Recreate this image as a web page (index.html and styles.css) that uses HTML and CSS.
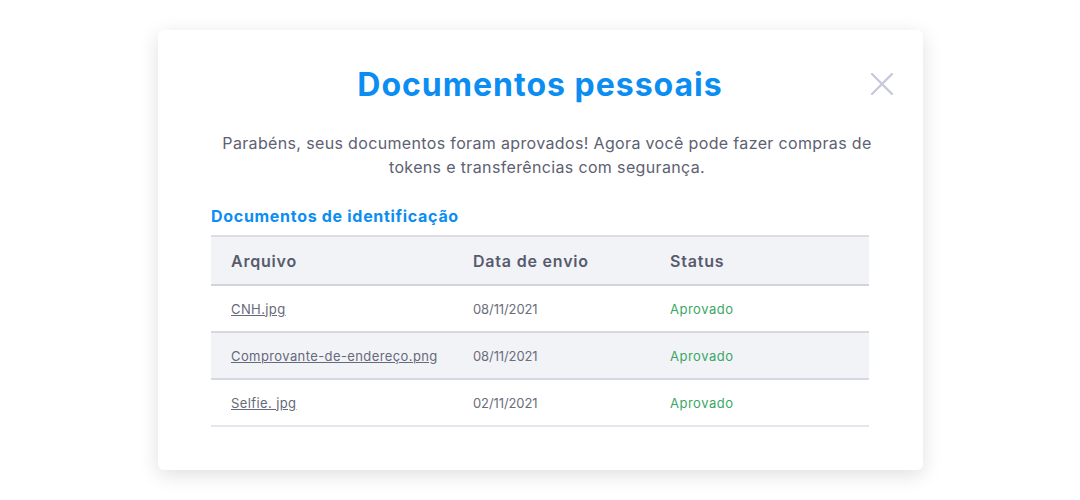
FILE: index.html
```html
<!DOCTYPE html>
<html lang="pt-BR">
<head>
<meta charset="utf-8">
<link rel="stylesheet" href="styles.css">
</head>
<body>
<div class="modal">
  <div class="modal-head">
    <h1 class="title">Documentos pessoais</h1>
    <button class="close" aria-label="Fechar">
      <svg width="22" height="22" viewBox="0 0 22 22"><path d="M1 1L21 21M21 1L1 21" stroke="#c8cadb" stroke-width="2.4" stroke-linecap="round"/></svg>
    </button>
  </div>
  <p class="lead">Parabéns, seus documentos foram aprovados! Agora você pode fazer compras de tokens e transferências com segurança.</p>
  <h2 class="section">Documentos de identificação</h2>
  <table class="docs">
    <thead>
      <tr><th class="c1">Arquivo</th><th class="c2">Data de envio</th><th>Status</th></tr>
    </thead>
    <tbody>
      <tr><td><a class="file">CNH.jpg</a></td><td class="date">08/11/2021</td><td class="ok">Aprovado</td></tr>
      <tr class="alt"><td><a class="file">Comprovante-de-endereço.png</a></td><td class="date">08/11/2021</td><td class="ok">Aprovado</td></tr>
      <tr class="last"><td><a class="file">Selfie. jpg</a></td><td class="date">02/11/2021</td><td class="ok">Aprovado</td></tr>
    </tbody>
  </table>
</div>
</body>
</html>
```
FILE: styles.css
```css
html, body { margin: 0; padding: 0; background: #ffffff; }
body { font-family: "Inter", "Noto Sans", sans-serif; padding: 30px 0; min-height: 500px; box-sizing: border-box; }
.modal {
  width: 765px; box-sizing: border-box; margin: 0 0 0 158px;
  background: #fff; border-radius: 6px;
  box-shadow: 0 5px 20px rgba(0,0,0,0.13);
  padding: 34px 54px 43px 53px;
  height: 440px;
}
.modal-head { position: relative; text-align: center; }
.title { margin: 0; font-size: 32px; line-height: 42px; font-weight: 700; color: #0b8df2; letter-spacing: 1px; }
.close { position: absolute; right: -24px; top: 9px; border: 0; background: none; padding: 0; width: 22px; height: 22px; display: block; }
.lead { margin: 25px -6px 0 8px; text-align: center; font-size: 16px; line-height: 24px; color: #5d6172; letter-spacing: 0.35px; }
.section { margin: 27px 0 0; font-size: 16px; line-height: 20px; font-weight: 700; color: #0b8df2; letter-spacing: 0.7px; }
.docs { width: 100%; border-collapse: collapse; margin-top: 9px; }
.docs th { text-align: left; font-size: 16px; font-weight: 600; color: #575b6d; background: #f2f3f7; height: 47px; padding: 0 0 0 20px; border-top: 2px solid #dcdde6; border-bottom: 2px solid #d3d4df; letter-spacing: 0.8px; }
.docs th.c1 { width: 222px; }
.docs th.c2 { width: 177px; }
.docs td { font-size: 13px; color: #6a6d7b; padding: 0 0 0 20px; height: 45px; border-bottom: 2px solid #d6d7e1; letter-spacing: 0.4px; }
.docs td.date { letter-spacing: -0.1px; }
.docs tr.alt td { background: #f2f3f7; }
.docs tr.last td { border-bottom-color: #e5e6ee; }
.file { color: #666979; text-decoration: underline; }
.ok { color: #3aa765 !important; letter-spacing: 0.5px !important; }
```
